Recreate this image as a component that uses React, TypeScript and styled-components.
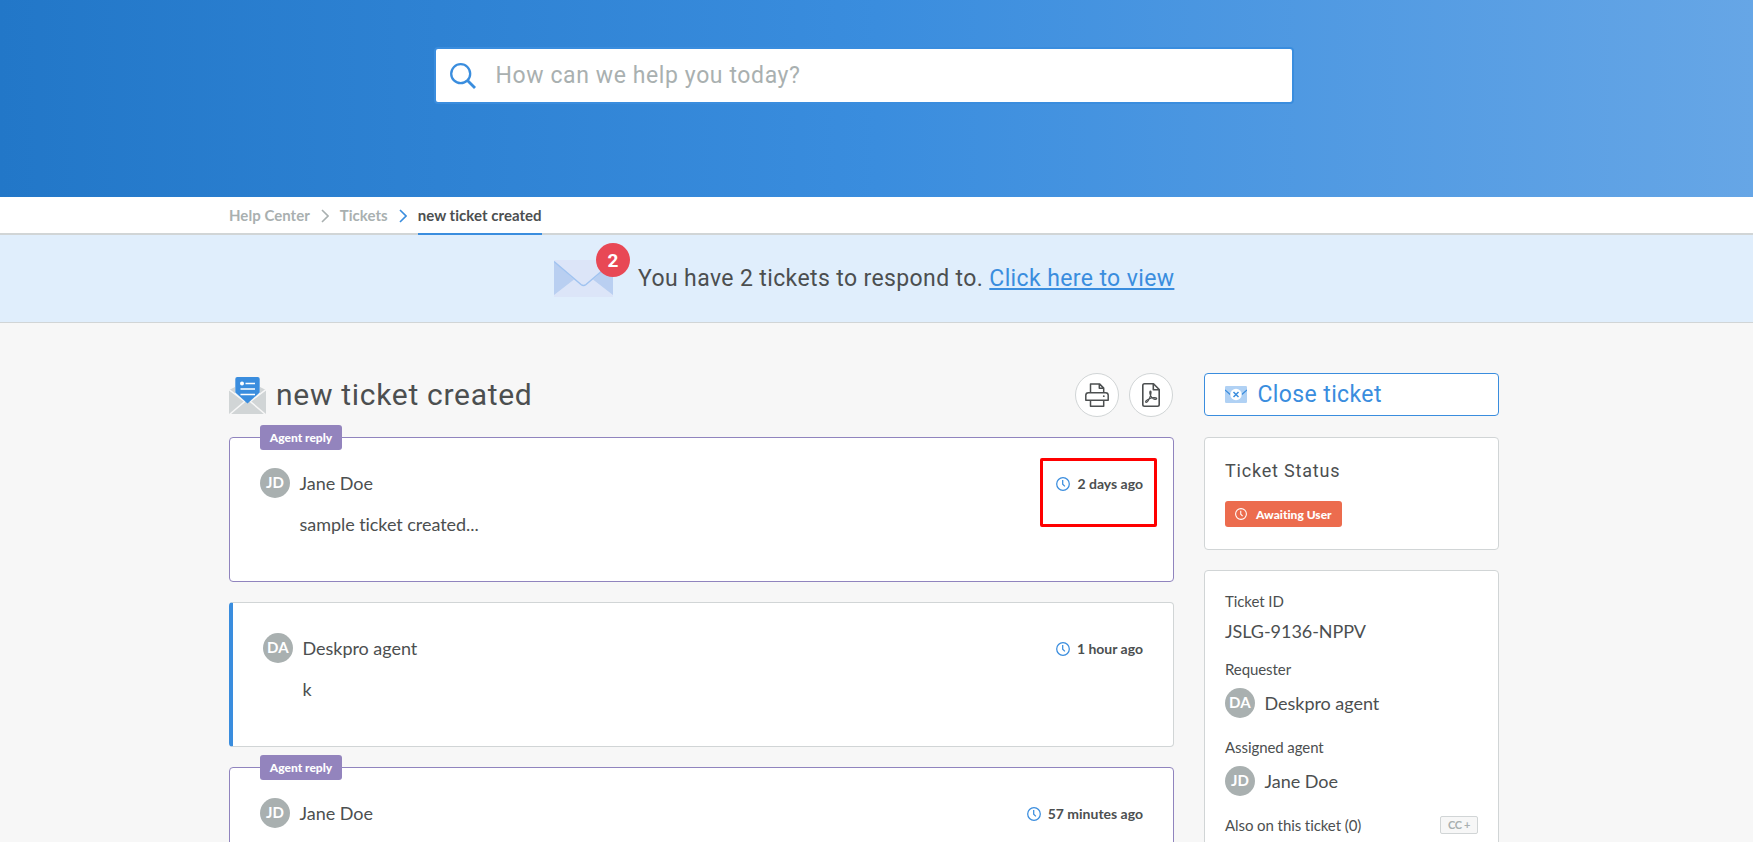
import React from 'react';
import styled, { createGlobalStyle } from 'styled-components';

const Global = createGlobalStyle`
  * { box-sizing: border-box; }
  html, body { margin: 0; height: 842px; overflow: hidden; }
  body { background: #f7f7f7; color: #4c4f50; font-family: Lato, sans-serif; font-size: 18px; font-variant-ligatures: none; }
`;
const heading = `font-family: Roboto, sans-serif; font-weight: 400; white-space: nowrap;`;

const Page = styled.div`height: 842px; overflow: hidden;`;
const Hero = styled.header`
  height: 197px; padding-top: 47px; display: flex; justify-content: center; align-items: flex-start;
  padding-right: 25px;
  background: linear-gradient(90deg, #2277c8 0%, #3a8dde 50%, #66a6e6 100%);
`;
const SearchBox = styled.label`
  width: 860px; height: 57px; border: 2px solid #3a8dde; border-radius: 4px; background: #fff;
  display: flex; align-items: center; padding-left: 14px;
`;
const SearchText = styled.span`${heading} color: #a9b0b0; font-size: 23px; letter-spacing: 0.6px; margin-left: 19.5px; line-height: 28px;`;

const Crumbs = styled.nav`
  height: 38px; background: #fff; border-bottom: 2px solid #d1d5d6; padding-left: 229px; display: flex; align-items: flex-start;
`;
const Crumb = styled.span<{ $current?: boolean }>`
  height: 38px; line-height: 36px; font-size: 15px; font-weight: 700; white-space: nowrap; letter-spacing: 0.03px;
  color: ${p => (p.$current ? '#4c4f50' : '#a9b0b0')};
  border-bottom: 2px solid ${p => (p.$current ? '#3a8dde' : 'transparent')};
`;
const Chevron = styled.svg`width: 8px; height: 14px; margin: 12px 11px 0;`;

const Banner = styled.section`
  height: 88px; background: #e0eefc; border-bottom: 1px solid #d1d5d6; padding-left: 554px; display: flex; align-items: center;
`;
const Mail = styled.div`position: relative; width: 59px; height: 37px; margin-right: 25px;`;
const MailCount = styled.span`
  position: absolute; left: 42px; top: -17px; width: 34px; height: 34px; border-radius: 50%; background: #e84855; color: #fff;
  font: 700 19px/35px Roboto, sans-serif; text-align: center;
`;
const BannerText = styled.p`${heading} margin: 0; font-size: 23px; letter-spacing: 0.38px; line-height: 28px;`;
const BannerLink = styled.a`color: #3a8dde; text-decoration: underline; text-decoration-thickness: 2px; text-underline-offset: 2px;`;

const Content = styled.main`
  display: grid; grid-template-columns: 945px 295px; column-gap: 30px; padding: 50px 0 0 229px;
`;
const TitleRow = styled.div`height: 44px; display: flex; align-items: center; margin-bottom: 20px; padding-right: 1px;`;
const Title = styled.h1`${heading} flex: 1; margin: 0 0 0 10px; font-size: 30px; line-height: 36px; letter-spacing: 0.7px;`;
const RoundButton = styled.button`
  width: 44px; height: 44px; border: 1px solid #d1d5d6; border-radius: 50%; background: #fff; padding: 0; margin-left: 10px;
  display: flex; align-items: center; justify-content: center;
`;
const Message = styled.article<{ $kind: 'agent' | 'user' }>`
  position: relative; height: 145px; margin-bottom: 20px; background: #fff; border-radius: 4px; padding: 30px;
  border: 1px solid ${p => (p.$kind === 'agent' ? '#9084be' : '#d1d5d6')};
  ${p => p.$kind === 'user' && 'border-left: 4px solid #3a8dde;'}
`;
const ReplyTag = styled.span`
  position: absolute; left: 30px; top: -13px; width: 82px; height: 25px; border-radius: 3px; background: #9384bd; color: #fff;
  font-size: 12px; font-weight: 900; line-height: 26px; text-align: center; white-space: nowrap;
`;
const MessageHead = styled.div`display: flex; align-items: center; justify-content: space-between;`;
const PersonRow = styled.div`display: flex; align-items: center; gap: 9.5px; height: 30px; line-height: 30px;`;
const Avatar = styled.span`
  width: 30px; height: 30px; border-radius: 50%; background: #a9b0b0; color: #fff; font-size: 15px; font-weight: 700;
  line-height: 29px; text-align: center; letter-spacing: 0.2px;
`;
const PersonName = styled.span`font-size: 18px; white-space: nowrap; letter-spacing: -0.03px;`;
const When = styled.time`display: flex; align-items: center; gap: 7px; font-size: 14px; font-weight: 700; line-height: 20px; padding-top: 2px; white-space: nowrap;`;
const MessageText = styled.p`margin: 14px 0 0 39.5px; font-size: 18px; line-height: 24px; letter-spacing: -0.05px;`;
const Highlight = styled.div`
  position: absolute; left: 810px; top: 20px; width: 117px; height: 69px; border: 3px solid #f00; border-radius: 2px;
`;

const CloseButton = styled.button`
  width: 295px; height: 43px; margin-bottom: 21px; border: 1px solid #3a8dde; border-radius: 4px; background: #fff;
  display: flex; align-items: center; padding: 0 20px; ${heading} color: #3a8dde; font-size: 23px; letter-spacing: 0.38px; gap: 10.5px;
`;
const Panel = styled.section<{ $height: number }>`
  height: ${p => p.$height}px; margin-bottom: 20px; padding: 20px; background: #fff; border: 1px solid #d1d5d6; border-radius: 4px;
`;
const PanelTitle = styled.h2`${heading} margin: 1px 0 18px; font-size: 18px; line-height: 24px; letter-spacing: 0.8px;`;
const Status = styled.span`
  width: 117px; height: 26px; display: flex; align-items: center; gap: 9px; padding-left: 10px; border-radius: 3px;
  background: #ec6c4e; color: #fff; font-size: 12px; font-weight: 900; white-space: nowrap;
`;
const Label = styled.div`font-size: 15px; line-height: 20px; white-space: nowrap; letter-spacing: -0.08px;`;
const Field = styled.div<{ $gap: number }>`margin-bottom: ${p => p.$gap}px;`;
const TicketCode = styled.div`font-size: 18px; line-height: 24px; margin-top: 8px; letter-spacing: -0.05px;`;
const FieldPerson = styled.div`margin-top: 9px;`;
const CcRow = styled.div`display: flex; justify-content: space-between; align-items: center;`;
const CcButton = styled.button`
  width: 38px; height: 18px; padding: 0; border: 1px solid #d1d5d6; border-radius: 2px; background: #f7f7f7; color: #a9b0b0;
  font: 700 11px/16px Lato, sans-serif; letter-spacing: -0.3px;
`;

const Arrow = ({ color }: { color: string }) => (
  <Chevron viewBox="0 0 8 14" fill="none" stroke={color} strokeWidth="1.6"><path d="M1 1l6 6-6 6" /></Chevron>
);
const Clock = ({ size = 14, color = '#3a8dde' }: { size?: number; color?: string }) => (
  <svg width={size} height={size} viewBox="0 0 14 14" fill="none" stroke={color} strokeWidth="1.25">
    <circle cx="7" cy="7" r="6.3" /><path d="M6.7 3.1v4.2l2.2 2.1" />
  </svg>
);
const SearchIcon = () => (
  <svg width="26" height="26" viewBox="0 0 26 26" fill="none" stroke="#3a8dde" strokeWidth="2.3">
    <circle cx="10.7" cy="10.7" r="9.5" /><path d="M17.5 17.5l7.5 7.5" strokeWidth="2.8" />
  </svg>
);
const TicketIcon = () => (
  <svg width="37" height="37" viewBox="0 0 37 37">
    <path d="M0 13l18.5 14L0 37zM37 13L18.5 27 37 37z" fill="#d1d5d6" />
    <path d="M0 13l6-3v8zM37 13l-6-3v8zM1 37l14.5-13h6L36 37z" fill="#d1d5d6" />
    <path d="M0 12.5l15.7 12L1 37M37 12.5l-15.7 12L36 37" fill="none" stroke="#f7f7f7" strokeWidth="1.5" />
    <path d="M6.3 2Q6.3 0 8.3 0h20.4q2 0 2 2v13.5L18.5 26.5 6.3 15.5z" fill="#3a8dde" />
    <circle cx="13" cy="6.5" r="2" fill="#fff" />
    <path d="M16.5 6.5H26M11.5 12H26M11.5 17.5H26" stroke="#fff" strokeWidth="1.7" />
  </svg>
);
const Printer = () => (
  <svg width="24" height="24" viewBox="0 0 24 24" fill="none" stroke="#4c4f50" strokeWidth="1.5" strokeLinejoin="round">
    <path d="M5.5 9.7V.9h9l4.2 4.2v4.6M14.3 1v4.3h4.4M.8 17.3v-5q0-2.6 2.6-2.6h17.2q2.6 0 2.6 2.6v5zM5.5 17.3v5.9h13.2v-5.9" />
    <circle cx="18.8" cy="13.2" r=".9" fill="#4c4f50" stroke="none" />
  </svg>
);
const PdfIcon = () => (
  <svg width="18" height="24" viewBox="0 0 18 24" fill="none" stroke="#4c4f50" strokeWidth="1.6" strokeLinejoin="round">
    <path d="M2.5.8h9l5.7 5.7v15q0 1.7-1.7 1.7h-13Q.8 23.2.8 21.5v-19Q.8.8 2.5.8zM11.3 1v5.7H17" />
    <path d="M8.5 8.2c-1.4 0-.5 4.1 1.2 6.2 1.8 2.2 5 2.6 5 1.2 0-1.3-4.7-1.2-7.4.1-2.5 1.1-4.4 2.9-3.4 3.5 1.4.9 3.6-3.4 4.5-6.3.6-2.1 1-4.7.1-4.7z" strokeWidth="1.2" />
  </svg>
);
const CloseMail = () => (
  <svg width="22" height="17" viewBox="0 0 22 17">
    <rect width="22" height="17" rx="1.3" fill="#b0d1f4" /><path d="M0 4l5.5 4.7M22 4l-5.5 4.7" stroke="#3a8dde" strokeWidth="1.2" />
    <circle cx="11" cy="8.5" r="5.7" fill="#fff" /><path d="M8.5 6l5 5m0-5l-5 5" stroke="#3a8dde" strokeWidth="1.5" />
  </svg>
);
const MailIcon = () => (
  <svg width="59" height="37" viewBox="0 0 59 37">
    <path d="M0 0h59v37H0z" fill="#dce5f8" /><path d="M0 2l20 17.5L0 35zM59 2L39 19.5 59 35z" fill="#b9cff1" />
    <path d="M0 1.5l27 23q2.5 2 5 0l27-23" fill="none" stroke="#a0c3f0" strokeWidth="1.5" />
  </svg>
);

const Person = ({ initials, name }: { initials: string; name: string }) => (
  <PersonRow><Avatar>{initials}</Avatar><PersonName>{name}</PersonName></PersonRow>
);

const messages = [
  { kind: 'agent' as const, initials: 'JD', name: 'Jane Doe', when: '2 days ago', text: 'sample ticket created...', highlight: true },
  { kind: 'user' as const, initials: 'DA', name: 'Deskpro agent', when: '1 hour ago', text: 'k' },
  { kind: 'agent' as const, initials: 'JD', name: 'Jane Doe', when: '57 minutes ago', text: '' },
];

export default function App() {
  return (
    <Page>
      <Global />
      <Hero><SearchBox><SearchIcon /><SearchText>How can we help you today?</SearchText></SearchBox></Hero>
      <Crumbs>
        <Crumb>Help Center</Crumb><Arrow color="#a9b0b0" /><Crumb>Tickets</Crumb><Arrow color="#3a8dde" /><Crumb $current>new ticket created</Crumb>
      </Crumbs>
      <Banner>
        <Mail><MailIcon /><MailCount>2</MailCount></Mail>
        <BannerText>You have 2 tickets to respond to. <BannerLink>Click here to view</BannerLink></BannerText>
      </Banner>
      <Content>
        <div>
          <TitleRow>
            <TicketIcon /><Title>new ticket created</Title>
            <RoundButton aria-label="Print"><Printer /></RoundButton>
            <RoundButton aria-label="Download PDF"><PdfIcon /></RoundButton>
          </TitleRow>
          {messages.map(m => (
            <Message key={m.when} $kind={m.kind}>
              {m.kind === 'agent' && <ReplyTag>Agent reply</ReplyTag>}
              <MessageHead><Person initials={m.initials} name={m.name} /><When><Clock />{m.when}</When></MessageHead>
              <MessageText>{m.text}</MessageText>
              {m.highlight && <Highlight />}
            </Message>
          ))}
        </div>
        <aside>
          <CloseButton><CloseMail />Close ticket</CloseButton>
          <Panel $height={113}>
            <PanelTitle>Ticket Status</PanelTitle>
            <Status><Clock size={12} color="#fff" />Awaiting User</Status>
          </Panel>
          <Panel $height={400}>
            <Field $gap={16}><Label>Ticket ID</Label><TicketCode>JSLG-9136-NPPV</TicketCode></Field>
            <Field $gap={19}><Label>Requester</Label><FieldPerson><Person initials="DA" name="Deskpro agent" /></FieldPerson></Field>
            <Field $gap={19}><Label>Assigned agent</Label><FieldPerson><Person initials="JD" name="Jane Doe" /></FieldPerson></Field>
            <CcRow><Label>Also on this ticket (0)</Label><CcButton>CC +</CcButton></CcRow>
          </Panel>
        </aside>
      </Content>
    </Page>
  );
}
